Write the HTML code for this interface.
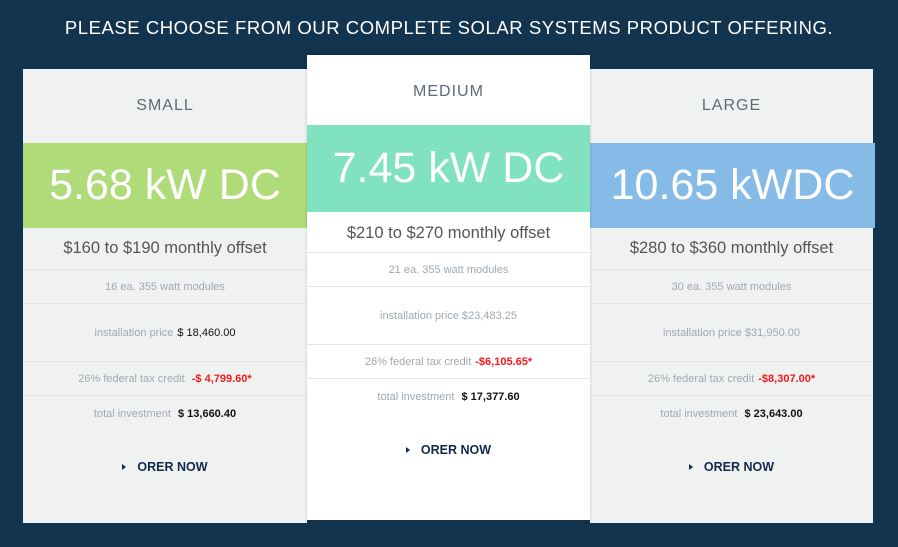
<!DOCTYPE html>
<html><head><style>
*{margin:0;padding:0;box-sizing:border-box}
body{width:898px;height:547px;background:#13344f;font-family:"Liberation Sans",sans-serif;position:relative;overflow:hidden}
h1{position:absolute;top:17px;left:0;width:898px;text-align:center;color:#fff;font-weight:normal;font-size:18.5px;letter-spacing:0.55px}
.card{position:absolute;background:#f0f2f2;text-align:center}
.card.m{background:#fff}
.t{color:#5a6b7c;font-size:16px;letter-spacing:1px}
.band{color:#fff;font-size:43px;display:flex;align-items:center;justify-content:center}
.off{color:#555;font-size:16.5px;display:flex;align-items:center;justify-content:center;border-bottom:1px solid #e2e6e8}
.row{color:#a0a8b0;font-size:11px;display:flex;align-items:center;justify-content:center;border-bottom:1px solid #e2e6e8}
.row b{color:#111;font-weight:bold;margin-left:4px}
.row .r{color:#f01a1a;font-weight:bold;margin-left:4px}
.tot{color:#a0a8b0;font-size:11px;padding-top:12px}
.tot b{color:#111;margin-left:4px}
.ord{color:#13294a;font-weight:bold;font-size:12.5px;margin-top:40px}
.ord:before{content:"";display:inline-block;border-left:4px solid #13294a;border-top:3.5px solid transparent;border-bottom:3.5px solid transparent;margin-right:11px;vertical-align:1px}
</style></head><body>
<h1>PLEASE CHOOSE FROM OUR COMPLETE SOLAR SYSTEMS PRODUCT OFFERING.</h1>

<div class="card" style="left:23px;top:69px;width:284px;height:454px">
<div class="t" style="height:74px;line-height:74px">SMALL</div>
<div class="band" style="height:85px;background:#afdc78">5.68 kW DC</div>
<div class="off" style="height:42px">$160 to $190 monthly offset</div>
<div class="row" style="height:34px">16 ea. 355 watt modules</div>
<div class="row" style="height:58px">installation price <b style="font-weight:normal">$ 18,460.00</b></div>
<div class="row" style="height:34px">26% federal tax credit <span class="r">&nbsp;-$ 4,799.60*</span></div>
<div class="tot">total investment <b>$ 13,660.40</b></div>
<div class="ord">ORER NOW</div>
</div>

<div class="card" style="left:590px;top:69px;width:283px;height:454px">
<div class="t" style="height:74px;line-height:74px">LARGE</div>
<div class="band" style="height:85px;background:#86bbe8;margin-right:-2px">10.65 kWDC</div>
<div class="off" style="height:42px">$280 to $360 monthly offset</div>
<div class="row" style="height:34px">30 ea. 355 watt modules</div>
<div class="row" style="height:58px">installation price $31,950.00</div>
<div class="row" style="height:34px">26% federal tax credit <span class="r">-$8,307.00*</span></div>
<div class="tot">total investment <b>$ 23,643.00</b></div>
<div class="ord">ORER NOW</div>
</div>

<div class="card m" style="left:307px;top:55px;width:283px;height:465px;box-shadow:0 0 3px rgba(0,0,0,.2)">
<div class="t" style="height:70px;line-height:74px">MEDIUM</div>
<div class="band" style="height:87px;background:#80e2be">7.45 kW DC</div>
<div class="off" style="height:41px;padding-top:2px">$210 to $270 monthly offset</div>
<div class="row" style="height:34px">21 ea. 355 watt modules</div>
<div class="row" style="height:58px">installation price $23,483.25</div>
<div class="row" style="height:34px">26% federal tax credit <span class="r">-$6,105.65*</span></div>
<div class="tot">total investment <b>$ 17,377.60</b></div>
<div class="ord">ORER NOW</div>
</div>
</body></html>
